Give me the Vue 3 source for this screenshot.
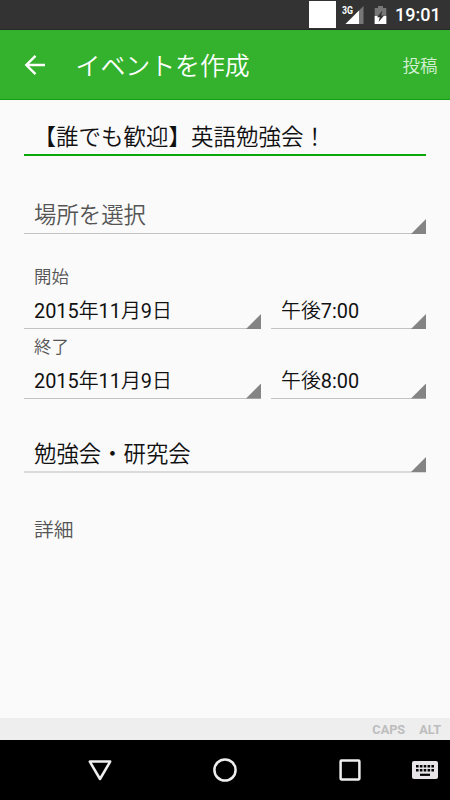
<script setup>
import { ref } from 'vue'

const title = ref('【誰でも歓迎】英語勉強会！')
const rows = [
  { label: '開始', date: '2015年11月9日', time: '午後7:00' },
  { label: '終了', date: '2015年11月9日', time: '午後8:00' }
]

// digits are set one step heavier than the kanji around them
const splitDigits = (text) => text.split(/([\d:]+)/).filter(Boolean)
const isDigits = (part) => /^\d/.test(part)
</script>

<template>
  <div class="screen">
    <div class="status-bar">
      <span class="notification"></span>
      <svg class="signal" width="24" height="22" viewBox="0 0 24 22">
        <path d="M22.5 2V20H4.5z" fill="#777" />
        <path d="M18 6.5V20H4.5z" fill="#fff" />
        <path d="M0 0h13v11H0z" fill="#333" />
        <text x="1" y="10" textLength="11" lengthAdjust="spacingAndGlyphs" class="signal-text">3G</text>
      </svg>
      <svg class="battery" width="13" height="20" viewBox="0 0 13 20">
        <path d="M4 1h5v2h3.3v16H.7V3H4z" fill="#777" />
        <path d="M.7 11h11.6v8H.7z" fill="#fff" />
        <path d="M8.5 5.5L3 12.2h2.8L4.5 17l5.6-6.6H7.2z" fill="#333" />
      </svg>
      <span class="clock">19:01</span>
    </div>

    <header class="toolbar">
      <svg class="back" width="22" height="22" viewBox="0 0 22 22">
        <path d="M21 11H3M11.5 1.8L2.3 11l9.2 9.2" fill="none" stroke="#fff" stroke-width="2.4" />
      </svg>
      <h1>イベントを作成</h1>
      <button class="post">投稿</button>
    </header>

    <main class="form">
      <div class="title-field">{{ title }}</div>
      <div class="field spinner location">場所を選択</div>
      <div v-for="row in rows" :key="row.label" class="period">
        <div class="label">{{ row.label }}</div>
        <div class="pickers">
          <div v-for="value in [row.date, row.time]" :key="value" class="field spinner">
            <span v-for="(part, i) in splitDigits(value)" :key="i" :class="{ digits: isDigits(part) }">{{ part }}</span>
          </div>
        </div>
      </div>
      <div class="field spinner category">勉強会・研究会</div>
      <div class="detail">詳細</div>
    </main>

    <div class="key-state">
      <span>CAPS</span>
      <span>ALT</span>
    </div>

    <nav class="nav-bar">
      <svg width="26" height="26" viewBox="0 0 26 26">
        <path d="M2.8 4.6h20.4L13 22z" fill="none" stroke="#eee" stroke-width="2.5" stroke-linejoin="round" />
      </svg>
      <svg width="26" height="26" viewBox="0 0 26 26">
        <circle cx="13" cy="13" r="10.6" fill="none" stroke="#eee" stroke-width="2.5" />
      </svg>
      <svg width="26" height="26" viewBox="0 0 26 26">
        <rect x="3.6" y="3.6" width="18.8" height="18.8" rx=".8" fill="none" stroke="#eee" stroke-width="2.5" />
      </svg>
      <svg class="keyboard" width="26" height="18" viewBox="0 0 26 18">
        <rect width="26" height="18" rx="2" fill="#e8e4e8" />
        <path d="M4 5.2h18M4 9.2h18" stroke="#000" stroke-width="2.4" stroke-dasharray="2.6 1.25" />
        <path d="M8 13.8h10" stroke="#000" stroke-width="2.2" />
      </svg>
    </nav>
  </div>
</template>

<style>
body {
  margin: 0;
}
</style>

<style scoped>
.screen {
  display: flex;
  flex-direction: column;
  width: 450px;
  height: 800px;
  overflow: hidden;
  background: #fafafa;
  color: #111;
  font-family: Roboto, "Noto Sans CJK JP", sans-serif;
  font-weight: 350;
}

.status-bar {
  display: flex;
  align-items: center;
  box-sizing: border-box;
  height: 30px;
  padding-right: 10px;
  background: #333;
  border-bottom: 1px solid #242a24;
  justify-content: flex-end;
}

.notification {
  width: 27px;
  height: 27px;
  background: #fff;
}

.signal {
  margin-left: 5px;
}

.signal-text {
  font-size: 10px;
  font-weight: 700;
  fill: #fff;
}

.battery {
  margin-left: 9px;
}

.clock {
  width: 45px;
  margin-left: 8px;
  font-size: 18px;
  font-weight: 500;
  line-height: 32px;
  color: #fff;
  white-space: nowrap;
}

.toolbar {
  display: flex;
  align-items: center;
  box-sizing: border-box;
  height: 70px;
  padding: 0 12.5px 0 24px;
  background: #34b22d;
  border-bottom: 1px solid #10a010;
  color: #fff;
}

.toolbar h1 {
  flex: 1;
  margin: 0 0 0 29.5px;
  padding-top: 4px;
  font-size: 24.9px;
  font-weight: 350;
  line-height: 40px;
}

.post {
  padding: 0;
  border: 0;
  background: none;
  font: inherit;
  font-size: 17.5px;
  color: #d6f0d5;
}

.form {
  flex: 1;
  padding: 0 24px;
}

.title-field {
  height: 37px;
  margin-top: 17px;
  padding-left: 9.5px;
  border-bottom: 2px solid #0aa80a;
  font-size: 22.5px;
  line-height: 41px;
}

.field {
  position: relative;
  box-sizing: border-box;
  padding-left: 10px;
  border-bottom: 1px solid #c2c2c2;
  white-space: nowrap;
}

.spinner::after {
  content: '';
  position: absolute;
  right: 0;
  bottom: -1px;
  width: 15px;
  height: 15px;
  background: #848484;
  clip-path: polygon(100% 0, 100% 100%, 0 100%);
}

.location {
  height: 40px;
  margin: 38px 0 31px;
  font-size: 22.4px;
  line-height: 42px;
  color: #555;
}

.period {
  height: 69.5px;
}

.label {
  height: 30px;
  padding-left: 10px;
  font-size: 17.4px;
  line-height: 24px;
  color: #555;
}

.pickers {
  display: grid;
  grid-template-columns: 237px 155px;
  gap: 10px;
}

.pickers .field {
  height: 34px;
  font-size: 19.9px;
  line-height: 33px;
}

.digits {
  font-weight: 400;
}

.category {
  height: 40px;
  margin-top: 29px;
  border-bottom: 2px solid #dadada;
  font-size: 22.4px;
  line-height: 42px;
}

.detail {
  margin-top: 43px;
  padding-left: 10px;
  font-size: 19.8px;
  line-height: 30px;
  color: #555;
}

.key-state {
  display: flex;
  justify-content: flex-end;
  gap: 14px;
  box-sizing: border-box;
  height: 22px;
  padding-right: 9px;
  background: #eee;
  font-size: 12.7px;
  font-weight: 700;
  line-height: 23px;
  color: #bdbdbd;
}

.nav-bar {
  display: flex;
  align-items: center;
  gap: 99px;
  height: 60px;
  padding-left: 87px;
  background: #000;
}

.nav-bar svg {
  flex: none;
}

.nav-bar .keyboard {
  margin-left: -50px;
}
</style>
